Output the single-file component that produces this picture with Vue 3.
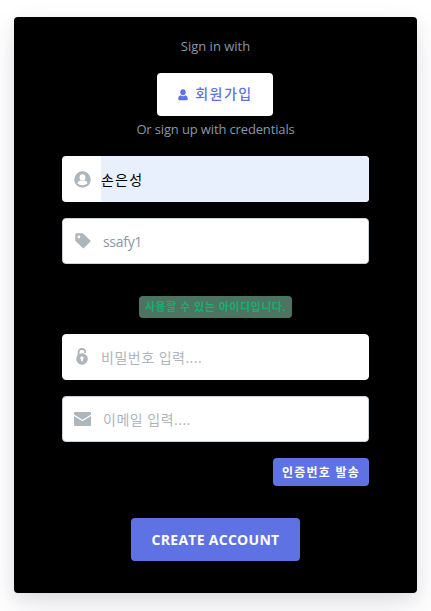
<script setup>
import { ref } from 'vue'

const name = ref('손은성')
const userId = ref('ssafy1')
const password = ref('')
const email = ref('')
</script>

<template>
  <main class="page">
    <form class="card" @submit.prevent>
      <p class="hint hint-top">Sign in with</p>
      <button type="button" class="btn btn-neutral">
        <svg width="10" height="12" viewBox="0 0 10 12" fill="currentColor">
          <ellipse cx="5" cy="3.3" rx="2.7" ry="3" />
          <path d="M2.4 6.3Q5 8 7.6 6.3Q9.8 7 9.8 9.8Q9.8 11.3 8.4 11.3H1.6Q.2 11.3 .2 9.8Q.2 7 2.4 6.3Z" />
        </svg>
        <span class="join">회원가입</span>
      </button>
      <p class="hint hint-bottom">Or sign up with credentials</p>

      <div class="field autofilled">
        <span class="addon">
          <svg width="17" height="17" viewBox="0 0 17 17">
            <circle cx="8.5" cy="8.5" r="8.2" fill="#adb5bd" />
            <ellipse cx="8.5" cy="6.5" rx="2.9" ry="3.2" fill="#fff" />
            <path d="M3.4 12.2Q4 10 6.4 9.6Q8.5 11 10.6 9.6Q13 10 13.6 12.2Q11.6 14.3 8.5 14.3T3.4 12.2Z" fill="#fff" />
          </svg>
        </span>
        <input v-model="name" class="name" type="text" />
      </div>

      <div class="field outlined">
        <span class="addon tag">
          <svg width="16" height="16" viewBox="0 0 16 16" fill="#adb5bd">
            <path fill-rule="evenodd" d="M1.5.3H7.2Q7.8.3 8.3.8L15.3 7.6Q15.9 8.2 15.3 8.8L9 15.1Q8.4 15.7 7.8 15.1L.8 8.2Q.3 7.7.3 7V1.5Q.3.3 1.5.3ZM3.9 2.6A1.4 1.4 0 1 0 3.9 5.4A1.4 1.4 0 1 0 3.9 2.6Z" />
          </svg>
        </span>
        <input v-model="userId" class="user-id" type="text" />
      </div>

      <span class="badge"><span>사용할 수 있는 아이디입니다.</span></span>

      <div class="field">
        <span class="addon lock">
          <svg width="12" height="17" viewBox="0 0 12 17">
            <path d="M2.6 8V4.2Q2.6 1 5.9 1T9.2 4.2V5" fill="none" stroke="#adb5bd" stroke-width="1.8" />
            <ellipse cx="6" cy="11" rx="5.8" ry="5.7" fill="#adb5bd" />
            <path d="M6 8.2A1.8 1.8 0 0 1 7.2 11.2L6.5 13.4H5.5L4.8 11.2A1.8 1.8 0 0 1 6 8.2Z" fill="#fff" />
          </svg>
        </span>
        <input v-model="password" class="password" type="password" placeholder="비밀번호 입력...." />
      </div>

      <div class="field outlined">
        <span class="addon mail">
          <svg width="17" height="14" viewBox="0 0 17 14" fill="#adb5bd">
            <path d="M.5 0H16.5Q17 0 17 .6V2.5L8.5 7.8L0 2.5V.6Q0 0 .5 0Z" />
            <path d="M0 4L8.5 9.2L17 4V13Q17 14 16.2 14H.8Q0 14 0 13Z" />
          </svg>
        </span>
        <input v-model="email" class="email" type="text" placeholder="이메일 입력...." />
      </div>

      <button type="button" class="btn btn-small"><span>인증번호 발송</span></button>
      <button type="submit" class="btn btn-create"><span>CREATE ACCOUNT</span></button>
    </form>
  </main>
</template>

<style>
body {
  background: #fff;
  overflow: hidden;
}
</style>

<style scoped>
.page {
  box-sizing: border-box;
  height: 611px;
  padding: 17px 14px 18px;
  font-family: "Open Sans", "Noto Sans CJK KR", sans-serif;
}
.card {
  box-sizing: border-box;
  height: 576px;
  padding: 17px 48px 0;
  display: flex;
  flex-direction: column;
  align-items: center;
  background: #000;
  border-radius: 4px;
  box-shadow: 0 15px 35px rgba(50, 50, 93, 0.1), 0 5px 15px rgba(0, 0, 0, 0.07);
}
.hint {
  margin: 0;
  font-size: 13px;
  line-height: 24px;
  color: #8898aa;
  white-space: nowrap;
}
.hint-top {
  margin-bottom: 15px;
}
.hint-bottom {
  margin: 1px 0 15px;
  letter-spacing: -0.14px;
}
.btn {
  box-sizing: border-box;
  display: flex;
  align-items: center;
  justify-content: center;
  padding: 0;
  border: 0;
  border-radius: 4px;
  font-family: inherit;
  font-weight: 700;
  white-space: nowrap;
  color: #fff;
  background: #5e72e4;
  flex: none;
}
.btn-neutral {
  width: 116px;
  height: 43px;
  margin-right: 1px;
  padding-left: 1px;
  gap: 7px;
  background: #fff;
  color: #5e72e4;
  font-size: 14px;
}
.join {
  font-weight: 500;
  font-size: 14px;
  line-height: 20px;
  letter-spacing: 1.5px;
  padding-bottom: 1px;
}
.field {
  box-sizing: border-box;
  width: 307px;
  height: 46px;
  margin-bottom: 16px;
  display: flex;
  flex: none;
  border: 1px solid #fff;
  border-radius: 4px;
  overflow: hidden;
  background: #fff;
}
.outlined {
  border-color: #cad1d7;
}
.autofilled {
  border: 0;
}
.autofilled .addon {
  width: 39px;
  padding-left: 12px;
}
.addon {
  box-sizing: border-box;
  width: 38px;
  padding-left: 11px;
  flex: none;
  display: flex;
  align-items: center;
}
.tag {
  width: 40px;
  padding-left: 12px;
}
.lock {
  padding: 0 0 1px 13px;
}
.mail {
  width: 40px;
}
input {
  flex: 1;
  min-width: 0;
  padding: 0;
  border: 0;
  outline: 0;
  font-family: inherit;
  font-size: 14px;
  letter-spacing: 0.5px;
  color: #8898aa;
  background: transparent;
}
input::placeholder {
  color: #adb5bd;
  opacity: 1;
}
.name {
  padding-bottom: 1px;
  color: #000;
  background: #e8f0fe;
  letter-spacing: 1.2px;
}
.user-id {
  letter-spacing: -0.3px;
}
.badge {
  box-sizing: border-box;
  width: 153px;
  height: 22px;
  margin: 16px 0;
  display: flex;
  align-items: center;
  justify-content: center;
  flex: none;
  border-radius: 4px;
  background: #4b7462;
  color: #1aae6f;
  font-size: 11px;
  font-weight: 700;
  letter-spacing: 0.5px;
  padding-bottom: 2px;
  white-space: nowrap;
}
.btn-small {
  align-self: flex-end;
  width: 96px;
  height: 28px;
  font-size: 12px;
  letter-spacing: 1.2px;
}
.btn-create {
  width: 169px;
  height: 43px;
  margin-top: 32px;
  font-size: 14px;
  letter-spacing: 0.28px;
}
</style>
